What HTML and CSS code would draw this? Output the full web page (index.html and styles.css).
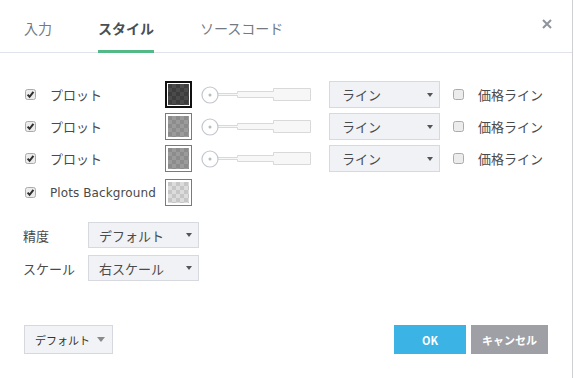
FILE: index.html
```html
<!DOCTYPE html>
<html lang="ja">
<head>
<meta charset="utf-8">
<link rel="stylesheet" href="styles.css">
</head>
<body>
<div class="dialog">
  <div class="tabs">
    <div class="tab">入力</div>
    <div class="tab active">スタイル</div>
    <div class="tab">ソースコード</div>
    <button class="close" aria-label="close">
      <svg width="10" height="10" viewBox="0 0 10 10"><path d="M1 1L9 9M9 1L1 9" stroke="#8f939b" stroke-width="2"/></svg>
    </button>
  </div>

  <div class="content">
    <div class="plot-row">
      <span class="cb checked"><svg width="11" height="11" viewBox="0 0 11 11"><rect x="0.5" y="0.5" width="10" height="10" rx="2" class="cb-box"/><path d="M2.6 5.6L4.6 7.8L8.4 2.8" class="cb-tick"/></svg></span>
      <span class="label">プロット</span>
      <span class="swatch sel"><span class="fill dark"></span></span>
      <svg class="slider" width="112" height="20" viewBox="0 0 112 20"><path d="M18 8.5H37.5V6.5H73.5V3.5H110.5V15.5H73.5V12.5H37.5V10.5H18" class="track"/><circle cx="10" cy="10" r="8" class="knob"/><circle cx="10" cy="10" r="1.5" class="dot"/></svg>
      <span class="select sel-line"><span>ライン</span><i class="caret"></i></span>
      <span class="cb price"><svg width="11" height="11" viewBox="0 0 11 11"><rect x="0.5" y="0.5" width="10" height="10" rx="2" class="cb-box"/></svg></span>
      <span class="label2">価格ライン</span>
    </div>
    <div class="plot-row">
      <span class="cb checked"><svg width="11" height="11" viewBox="0 0 11 11"><rect x="0.5" y="0.5" width="10" height="10" rx="2" class="cb-box"/><path d="M2.6 5.6L4.6 7.8L8.4 2.8" class="cb-tick"/></svg></span>
      <span class="label">プロット</span>
      <span class="swatch"><span class="fill mid"></span></span>
      <svg class="slider" width="112" height="20" viewBox="0 0 112 20"><path d="M18 8.5H37.5V6.5H73.5V3.5H110.5V15.5H73.5V12.5H37.5V10.5H18" class="track"/><circle cx="10" cy="10" r="8" class="knob"/><circle cx="10" cy="10" r="1.5" class="dot"/></svg>
      <span class="select sel-line"><span>ライン</span><i class="caret"></i></span>
      <span class="cb price"><svg width="11" height="11" viewBox="0 0 11 11"><rect x="0.5" y="0.5" width="10" height="10" rx="2" class="cb-box"/></svg></span>
      <span class="label2">価格ライン</span>
    </div>
    <div class="plot-row">
      <span class="cb checked"><svg width="11" height="11" viewBox="0 0 11 11"><rect x="0.5" y="0.5" width="10" height="10" rx="2" class="cb-box"/><path d="M2.6 5.6L4.6 7.8L8.4 2.8" class="cb-tick"/></svg></span>
      <span class="label">プロット</span>
      <span class="swatch"><span class="fill mid"></span></span>
      <svg class="slider" width="112" height="20" viewBox="0 0 112 20"><path d="M18 8.5H37.5V6.5H73.5V3.5H110.5V15.5H73.5V12.5H37.5V10.5H18" class="track"/><circle cx="10" cy="10" r="8" class="knob"/><circle cx="10" cy="10" r="1.5" class="dot"/></svg>
      <span class="select sel-line"><span>ライン</span><i class="caret"></i></span>
      <span class="cb price"><svg width="11" height="11" viewBox="0 0 11 11"><rect x="0.5" y="0.5" width="10" height="10" rx="2" class="cb-box"/></svg></span>
      <span class="label2">価格ライン</span>
    </div>
    <div class="plot-row bg-row">
      <span class="cb checked"><svg width="11" height="11" viewBox="0 0 11 11"><rect x="0.5" y="0.5" width="10" height="10" rx="2" class="cb-box"/><path d="M2.6 5.6L4.6 7.8L8.4 2.8" class="cb-tick"/></svg></span>
      <span class="label latin">Plots Background</span>
      <span class="swatch"><span class="fill light"></span></span>
    </div>

    <div class="prop-row first">
      <span class="prop-label">精度</span>
      <span class="select sel-prop"><span>デフォルト</span><i class="caret"></i></span>
    </div>
    <div class="prop-row">
      <span class="prop-label">スケール</span>
      <span class="select sel-prop"><span>右スケール</span><i class="caret"></i></span>
    </div>
  </div>

  <div class="footer">
    <button class="btn-default">デフォルト<i class="caret big"></i></button>
    <div class="actions">
      <button class="btn ok">OK</button>
      <button class="btn cancel">キャンセル</button>
    </div>
  </div>
</div>
</body>
</html>
```

FILE: styles.css
```css
* { box-sizing: border-box; }

html, body {
  margin: 0;
  padding: 0;
  background: #fff;
}

body {
  font-family: "Noto Sans CJK JP", "Noto Sans", sans-serif;
  color: #4a4a4a;
}

.dialog {
  width: 573px;
  height: 378px;
  border-right: 1px solid #cfd0d3;
  background: #fff;
}

/* Tabs */
.tabs {
  display: flex;
  align-items: stretch;
  height: 53px;
  border-bottom: 1px solid #e0e3eb;
}

.tab {
  display: flex;
  align-items: center;
  height: 53px;
  margin: 0 23px -1px;
  padding-top: 2px;
  font-size: 14px;
  color: #757a80;
}

.tab:first-child { margin-left: 24px; }

.tab.active {
  color: #4a4f56;
  font-weight: bold;
  box-shadow: inset 0 -3px 0 #53b987;
}

.close {
  margin-left: auto;
  margin-right: 20px;
  align-self: center;
  border: 0;
  background: none;
  padding: 0;
  width: 10px;
  height: 10px;
  margin-top: -4px;
  display: flex;
}

/* Content */
.content {
  padding: 28px 0 0 24px;
}

.plot-row {
  display: flex;
  align-items: center;
  height: 27px;
  margin-bottom: 5px;
}

.plot-row.bg-row { margin-top: 7px; }

.cb {
  display: flex;
  width: 11px;
  height: 11px;
  margin-left: 1px;
  flex: none;
}

.cb.price { margin-left: 13px; }

.cb-box {
  fill: #ececec;
  stroke: #ababab;
  stroke-width: 1;
}

.cb-tick {
  fill: none;
  stroke: #2f2f2f;
  stroke-width: 2;
}

.label {
  width: 115px;
  margin-left: 14px;
  flex: none;
  font-size: 13px;
  color: #4a4a4a;
}

.label.latin {
  font-family: "DejaVu Sans", sans-serif;
  font-size: 12px;
  letter-spacing: 0.1px;
}

.swatch {
  display: flex;
  width: 27px;
  height: 27px;
  padding: 2px;
  border: 1px solid #7a7a7a;
  background: #fff;
  flex: none;
}

.swatch.sel {
  border: 2px solid #111;
  padding: 1px;
}

.fill {
  flex: 1;
  background-size: 8px 8px;
}

.fill.dark {
  background-color: #3d3d3d;
  background-image: conic-gradient(#4b4b4b 25%, transparent 0 50%, #4b4b4b 0 75%, transparent 0);
}

.fill.mid {
  background-color: #8c8c8c;
  background-image: conic-gradient(#9b9b9b 25%, transparent 0 50%, #9b9b9b 0 75%, transparent 0);
}

.fill.light {
  background-color: #c6c6c6;
  background-image: conic-gradient(#dcdcdc 25%, transparent 0 50%, #dcdcdc 0 75%, transparent 0);
}

.slider {
  margin-left: 8px;
  flex: none;
}

.track {
  fill: #f7f7f7;
  stroke: #d9d9d9;
  stroke-width: 1;
}

.knob {
  fill: #fff;
  stroke: #c2c6cf;
  stroke-width: 1.2;
}

.dot { fill: #b6b9c0; }

.select {
  display: flex;
  align-items: center;
  justify-content: space-between;
  background: #f0f2f6;
  border: 1px solid #d6d9df;
  font-size: 13px;
  color: #4a4a4a;
  flex: none;
}

.sel-line {
  width: 111px;
  height: 27px;
  margin-left: 17px;
  padding: 0 6px 0 12px;
}

.caret {
  display: block;
  width: 0;
  height: 0;
  border-left: 3.5px solid transparent;
  border-right: 3.5px solid transparent;
  border-top: 4px solid #555;
}

.label2 {
  margin-left: 14px;
  font-size: 13px;
  color: #4a4a4a;
}

.prop-row {
  display: flex;
  align-items: center;
  height: 26px;
  margin-bottom: 7px;
  margin-left: -1px;
}

.prop-row.first { margin-top: 16px; }

.prop-label {
  width: 65px;
  font-size: 13px;
  flex: none;
}

.sel-prop {
  width: 111px;
  height: 26px;
  padding: 0 6px 0 10px;
}

/* Footer */
.footer {
  display: flex;
  justify-content: space-between;
  align-items: center;
  padding: 0 24px;
  margin-top: 44px;
}

.btn-default {
  display: flex;
  align-items: center;
  width: 89px;
  height: 29px;
  padding: 0 0 0 10px;
  background: #f1f3f6;
  border: 1px solid #d5d8de;
  font-family: inherit;
  font-size: 11px;
  color: #333;
}

.caret.big {
  margin-left: 7px;
  border-left-width: 4.5px;
  border-right-width: 4.5px;
  border-top: 5px solid #8a8a8a;
}

.actions {
  display: flex;
  gap: 5px;
}

.btn {
  height: 29px;
  border: 0;
  font-family: inherit;
  font-size: 11px;
  font-weight: bold;
  color: #fff;
}

.btn.ok {
  width: 72px;
  background: #3bb3e4;
}

.btn.cancel {
  width: 77px;
  background: #9ea0a6;
}
```
